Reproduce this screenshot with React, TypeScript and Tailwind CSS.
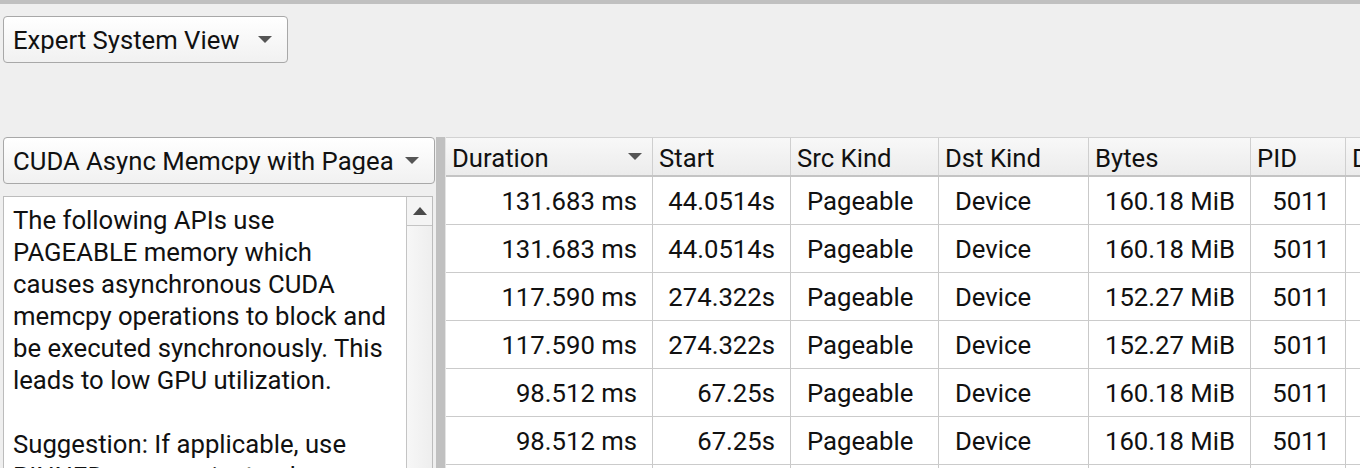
import type { ReactNode } from 'react';

type Row = {
  duration: string;
  start: string;
  src: string;
  dst: string;
  bytes: string;
  pid: string;
};

const rows: Row[] = [
  { duration: '131.683 ms', start: '44.0514s', src: 'Pageable', dst: 'Device', bytes: '160.18 MiB', pid: '5011' },
  { duration: '131.683 ms', start: '44.0514s', src: 'Pageable', dst: 'Device', bytes: '160.18 MiB', pid: '5011' },
  { duration: '117.590 ms', start: '274.322s', src: 'Pageable', dst: 'Device', bytes: '152.27 MiB', pid: '5011' },
  { duration: '117.590 ms', start: '274.322s', src: 'Pageable', dst: 'Device', bytes: '152.27 MiB', pid: '5011' },
  { duration: '98.512 ms', start: '67.25s', src: 'Pageable', dst: 'Device', bytes: '160.18 MiB', pid: '5011' },
  { duration: '98.512 ms', start: '67.25s', src: 'Pageable', dst: 'Device', bytes: '160.18 MiB', pid: '5011' },
  { duration: '98.512 ms', start: '67.25s', src: 'Pageable', dst: 'Device', bytes: '160.18 MiB', pid: '5011' },
];

const columns = [
  { title: 'Duration', width: 'w-[207px]' },
  { title: 'Start', width: 'w-[138px]' },
  { title: 'Src Kind', width: 'w-[148px]' },
  { title: 'Dst Kind', width: 'w-[150px]' },
  { title: 'Bytes', width: 'w-[162px]' },
  { title: 'PID', width: 'w-[95px]' },
  { title: 'Device', width: 'w-[120px]' },
];

function DownArrow({ className = '' }: { className?: string }) {
  return (
    <svg width="14" height="7" viewBox="0 0 14 7" className={className}>
      <path d="M0 0 L14 0 L7 7 Z" fill="#555555" />
    </svg>
  );
}

function ComboBox({ label, width }: { label: string; width: string }) {
  return (
    <div
      className={`${width} h-[47px] shrink-0 flex items-center rounded-[4px] border border-[#a8a8a8] bg-gradient-to-b from-[#ffffff] to-[#f1f1f1] pl-[9px] pr-[15px]`}
    >
      <span className="min-w-0 flex-1 overflow-hidden whitespace-nowrap pt-[2px] text-[25.7px] leading-none text-[#111]">{label}</span>
      <DownArrow className="ml-[12px] shrink-0" />
    </div>
  );
}

function Cell({ children, width, align }: { children: ReactNode; width: string; align: 'left' | 'right' }) {
  return (
    <div
      className={`${width} shrink-0 h-full flex items-center border-r border-[#c9c9c9] overflow-hidden whitespace-nowrap pt-[1px] ${
        align === 'right' ? 'justify-end pr-[15px]' : 'justify-start pl-[16px]'
      }`}
    >
      {children}
    </div>
  );
}

export default function App() {
  return (
    <div
      className="w-[1360px] h-[468px] overflow-hidden bg-[#efefef] text-[#111]"
      style={{ fontFamily: 'Roboto, "Liberation Sans", sans-serif' }}
    >
      <div className="h-[4px] bg-[#c0c0c0]" />
      <div className="pt-[12px] pl-[3px]">
        <ComboBox label="Expert System View" width="w-[285px]" />
      </div>

      <div className="mt-[74px] flex h-[331px]">
        {/* rule picker and its description */}
        <div className="ml-[3px] w-[432px] shrink-0 flex flex-col">
          <ComboBox label="CUDA Async Memcpy with Pageable Memory" width="w-[432px]" />
          <div className="mt-[12px] w-[430px] flex-1 flex border border-[#bcbcbc] bg-white">
            <div className="flex-1 pl-[9px] pt-[7px] text-[25.7px] leading-[32px] whitespace-nowrap overflow-hidden">
              The following APIs use
              <br />
              PAGEABLE memory which
              <br />
              causes asynchronous CUDA
              <br />
              memcpy operations to block and
              <br />
              be executed synchronously. This
              <br />
              leads to low GPU utilization.
              <br />
              <br />
              Suggestion: If applicable, use
              <br />
              PINNED memory instead.
            </div>
            <div className="w-[26px] shrink-0 flex flex-col border-l border-[#c4c4c4] bg-gradient-to-r from-[#f7f7f7] to-[#eeeeee]">
              <div className="h-[29px] flex items-center justify-center border-b border-[#c4c4c4] bg-[#f4f4f4]">
                <svg width="14" height="8" viewBox="0 0 14 8">
                  <path d="M0 8 L14 8 L7 0 Z" fill="#4a4a4a" />
                </svg>
              </div>
            </div>
          </div>
        </div>

        {/* splitter */}
        <div className="ml-[1px] w-[9px] shrink-0 bg-[#c0c0c0]" />

        {/* results table */}
        <div className="flex-1 overflow-hidden border-l border-[#e4e4e4] bg-white text-[25.7px]">
          <div className="flex h-[40px] border-t border-[#d2d2d2] border-b-2 border-b-[#c4c4c4] bg-gradient-to-b from-[#f8f8f8] to-[#ececec]">
            {columns.map((col, i) => (
              <div
                key={col.title}
                className={`${col.width} shrink-0 flex items-center border-r border-[#cfcfcf] pl-[6px] pr-[10px] pt-[3px] whitespace-nowrap overflow-hidden`}
              >
                <span className="flex-1">{col.title}</span>
                {i === 0 && <DownArrow className="-mt-[3px]" />}
              </div>
            ))}
          </div>
          {rows.map((row, i) => (
            <div key={i} className="flex h-[48px] border-b border-[#cbcbcb]">
              <Cell width="w-[207px]" align="right">{row.duration}</Cell>
              <Cell width="w-[138px]" align="right">{row.start}</Cell>
              <Cell width="w-[148px]" align="left">{row.src}</Cell>
              <Cell width="w-[150px]" align="left">{row.dst}</Cell>
              <Cell width="w-[162px]" align="right">{row.bytes}</Cell>
              <Cell width="w-[95px]" align="right">{row.pid}</Cell>
              <Cell width="w-[120px]" align="left">{''}</Cell>
            </div>
          ))}
        </div>
      </div>
    </div>
  );
}
